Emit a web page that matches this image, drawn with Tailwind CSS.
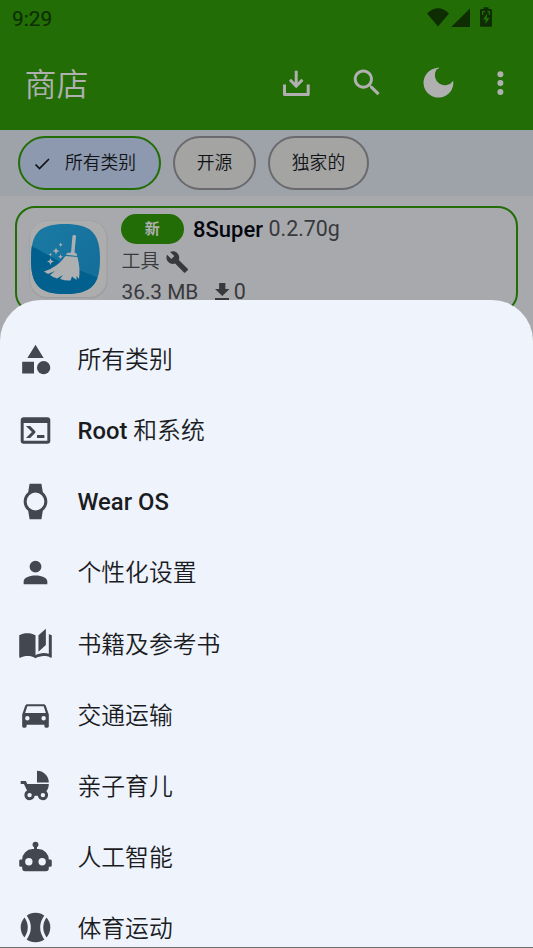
<!DOCTYPE html>
<html lang="zh-CN">
<head>
<meta charset="utf-8">
<title>商店</title>
<script src="https://cdn.jsdelivr.net/npm/@tailwindcss/browser@4"></script>
</head>
<body class="relative h-[948px] w-[533px] overflow-hidden bg-[#a8a9ad] font-[Roboto,'Noto_Sans_CJK_SC',sans-serif]">

<header class="h-[130px] bg-[#226d05]">
  <div class="flex h-9 items-center pl-3 pr-[40px] text-[#0e2d03]">
    <span class="pt-[2px] text-[20.800px] leading-6 font-normal [-webkit-text-stroke:0.200px]">9:29</span>
    <svg class="ml-auto h-9 w-[66px]" viewBox="427 0 66 36" fill="currentColor">
      <path d="M427 13.500Q438 3 449 13.500L438 26.500Z"/>
      <path d="M470 8.500V27H451.200Z"/>
      <path fill-rule="evenodd" d="M483.500 9V7.300h5V9h2.200q1.300 0 1.300 1.300v15.200q0 1.300-1.300 1.300h-9.400q-1.300 0-1.300-1.300V10.300Q480 9 481.300 9ZM487 13.500l-4 6h2.500v4.500l4-6h-2.500ZM482 11v4h1.200v-2.800h1.800V11ZM487.500 11v1.200h1.300V15h1.200v-4Z"/>
    </svg>
  </div>
  <div class="flex h-[94px] items-center text-[#b0b0b0]">
    <h1 class="ml-[24.500px] w-[254.500px] pt-[3px] text-[32px] leading-[40px] font-[350]">商店</h1>
    <svg class="h-[94px] w-[254px]" viewBox="279 36 254 94" fill="none" stroke="currentColor">
      <path stroke-width="3" stroke-linejoin="round" d="M284.500 84.500V94.500H308.200V84.500"/>
      <path stroke-width="3" d="M296.200 70.800V86M290 79.800L296.200 86.200L302.400 79.800"/>
      <path fill="currentColor" stroke="none" transform="translate(349.300 65) scale(1.480)" d="M15.500 14h-.79l-.28-.27C15.410 12.590 16 11.110 16 9.500 16 5.910 13.090 3 9.500 3S3 5.910 3 9.500 5.910 16 9.500 16c1.610 0 3.090-.59 4.230-1.570l.27.28v.79l5 4.990L20.490 19l-4.990-5zm-6 0C7.010 14 5 11.990 5 9.500S7.010 5 9.500 5 14 7.010 14 9.500 11.990 14 9.500 14z"/>
      <path fill="currentColor" stroke="none" d="M439 67.300V68.300L436.500 69.500A10 10 0 0 0 453.200 80.700A14.900 14.900 0 1 1 438 67.800Z"/>
      <g fill="currentColor" stroke="none"><circle cx="500.400" cy="74.200" r="3"/><circle cx="500.400" cy="83.100" r="3"/><circle cx="500.400" cy="92" r="3"/></g>
    </svg>
  </div>
</header>

<nav class="flex h-[66px] items-start gap-3 bg-[#9ea2a9] pt-[6px] pl-[18px] text-[17.800px] text-[#111317]">
  <div class="flex h-[54px] w-[143px] items-center rounded-full border-2 border-[#226d05] bg-[#8c99ae] pl-[13px]">
    <svg class="mr-[14px] h-[18px] w-[18px]" viewBox="0 0 18 18" fill="none" stroke="currentColor" stroke-width="1.700"><path d="M2.500 10.500L6.500 14.500L16 5"/></svg>
    <span class="font-[350]">所有类别</span>
  </div>
  <div class="flex h-[54px] w-[83px] items-center justify-center rounded-full border-2 border-[#6a6a6e] bg-[#a4a4a3] font-[350]">开源</div>
  <div class="flex h-[54px] w-[101px] items-center justify-center rounded-full border-2 border-[#6a6a6e] bg-[#a4a4a3] font-[350]">独家的</div>
</nav>

<main class="px-[15px] pt-[10px]">
  <article class="flex h-[107px] rounded-[20px] border-2 border-[#226d05] pl-[9px]">
    <svg class="mt-[10px] h-[84px] w-[84px]" viewBox="26 218 84 84">
      <defs>
        <linearGradient id="tile" x1="0" y1="0" x2="1" y2="1"><stop offset="0" stop-color="#1b7ba4"/><stop offset="1" stop-color="#126c98"/></linearGradient>
        <clipPath id="tileShape"><path d="M65 224C91 224 100 233 100 259S91 294 65 294S31 285 31 259S39 224 65 224Z"/></clipPath>
      </defs>
      <rect x="29.500" y="220.500" width="78" height="78" rx="18" fill="#9c9da1"/>
      <rect x="30" y="221" width="76.500" height="76" rx="17" fill="#adadae"/>
      <g clip-path="url(#tileShape)">
        <rect x="30" y="223" width="71" height="72" fill="url(#tile)"/>
        <path d="M30 245L62 263L101 279V296H30Z" fill="#02608f"/>
      </g>
      <g fill="#adafb0">
        <path d="M72.500 235.500Q76 234.300 76 236.500L74.500 252.500Q77.500 253.500 77 256L66 254.800Q66.500 252.500 71 252.500Z"/>
        <path d="M65.500 256L77.500 257Q80.500 269 79 279L76.500 276L76.500 280L72 276.500L70.500 280.500Q66 281 60 279L63 275L57 278.500Q53 277.500 50 275L55 271L48 274L44 271.500Q58 267 65.500 256Z"/>
        <path d="M56 247.500L57 250L59.500 251L57 252L56 254.500L55 252L52.500 251L55 250ZM50.500 258L51.500 260.500L54 261.500L51.500 262.500L50.500 265L49.500 262.500L47 261.500L49.500 260.500ZM60.700 242.500L61.300 244L62.700 244.700L61.300 245.400L60.700 247L60 245.400L58.700 244.700L60 244ZM50.500 252.500L51 254L52.500 254.500L51 255L50.500 256.500L50 255L48.500 254.500L50 254ZM60.500 254L61.200 256L63 256.700L61.200 257.400L60.500 259L59.800 257.400L58 256.700L59.800 256Z"/>
      </g>
    </svg>
    <div class="ml-[11px] flex flex-col text-[20.500px] text-[#38393c]">
      <div class="mt-[6px] flex h-[30px] items-center">
        <span class="mr-[9.500px] flex h-[30px] w-[62.500px] items-center justify-center rounded-full bg-[#226d05] text-[15px] font-bold text-[#b0b0b0]">新</span>
        <span class="text-[22px] font-medium text-[#05070f]">8Super</span>
        <span class="ml-[5.500px] pt-px text-[21.400px]">0.2.70g</span>
      </div>
      <div class="mt-[3px] flex h-[30px] items-center">
        <span class="pt-px pl-[0.500px] text-[19px] font-[350]">工具</span>
        <svg class="-mt-px ml-[6.500px] h-[22px] w-[22px]" viewBox="0.500 0.800 22.500 22.500" fill="currentColor"><path d="M22.700 19l-9.100-9.100c.9-2.300.4-5-1.500-6.900-2-2-5-2.400-7.400-1.300L9 6 6 9 1.600 4.700C.4 7.100.9 10.100 2.900 12.100c1.900 1.900 4.600 2.400 6.900 1.500l9.100 9.100c.4.4 1 .4 1.400 0l2.300-2.300c.5-.4.5-1.100.1-1.400z"/></svg>
      </div>
      <div class="flex h-[30px] items-center text-[21.500px]">
        <span class="pt-px pl-[0.500px] text-[20.800px]">36.3 MB</span>
        <svg class="mr-[4.500px] -mt-[2px] ml-[16.500px] h-[17px] w-[14.500px]" viewBox="5 3 14 17" preserveAspectRatio="none" fill="currentColor"><path d="M5 20h14v-2H5v2zM19 9h-4V3H9v6H5l7 7 7-7z"/></svg>
        <span class="pt-px">0</span>
      </div>
    </div>
  </article>
</main>

<section class="absolute inset-x-0 top-[300px] h-[647px] overflow-hidden rounded-t-[41px] bg-[#eef3fc] pt-[23.500px] text-[23.800px] text-[#1b1c1f]">
  <ul class="[&>li]:flex [&>li]:h-[71.100px] [&>li]:items-center [&>li]:gap-[23.500px] [&>li]:pl-[17px] [&>li>span]:pt-[4px] [&_svg]:h-[37px] [&_svg]:w-[37px] [&_svg]:fill-[#424750]">
    <li><svg viewBox="-0.500 -0.500 25 25"><path d="M12 2l-5.500 9h11zM3 13.500h8v8H3z"/><circle cx="17.500" cy="17.500" r="4.500"/></svg><span class="font-[350]">所有类别</span></li>
    <li><svg viewBox="-0.500 -0.500 25 25"><path d="M20,19V7H4V19H20M20,3A2,2 0 0,1 22,5V19A2,2 0 0,1 20,21H4A2,2 0 0,1 2,19V5C2,3.890 2.900,3 4,3H20M13,17V15H18V17H13M9.580,13L5.570,9H8.400L11.700,12.300C12.090,12.690 12.090,13.330 11.700,13.720L8.420,17H5.590L9.580,13Z"/></svg><span class="font-[350]"><b class="font-medium">Root </b>和系统</span></li>
    <li><svg viewBox="-0.500 -0.500 25 25"><path d="M6,12A6,6 0 0,1 12,6A6,6 0 0,1 18,12A6,6 0 0,1 12,18A6,6 0 0,1 6,12M20,12C20,9.450 18.810,7.190 16.950,5.730L16,0H8L7.050,5.730C5.190,7.190 4,9.450 4,12C4,14.540 5.190,16.810 7.050,18.270L8,24H16L16.950,18.270C18.810,16.810 20,14.540 20,12Z"/></svg><span class="font-medium">Wear OS</span></li>
    <li><svg viewBox="-0.500 -0.500 25 25"><path d="M12,4A4,4 0 0,1 16,8A4,4 0 0,1 12,12A4,4 0 0,1 8,8A4,4 0 0,1 12,4M12,14C16.420,14 20,15.790 20,18V20H4V18C4,15.790 7.580,14 12,14Z"/></svg><span class="font-[350]">个性化设置</span></li>
    <li><svg viewBox="-0.500 -0.500 25 25"><path d="M19 2L14 6.500V17.500L19 13V2M6.500 5C4.550 5 2.450 5.400 1 6.500V21.160C1 21.410 1.250 21.660 1.500 21.660C1.600 21.660 1.650 21.590 1.750 21.590C3.100 20.940 5.050 20.500 6.500 20.500C8.450 20.500 10.550 20.900 12 22C13.350 21.150 15.800 20.500 17.500 20.500C19.150 20.500 20.850 20.810 22.250 21.560C22.350 21.610 22.400 21.590 22.500 21.590C22.750 21.590 23 21.340 23 21.090V6.500C22.400 6.050 21.750 5.750 21 5.500V19C19.900 18.650 18.700 18.500 17.500 18.500C15.800 18.500 13.350 19.150 12 20V6.500C10.550 5.400 8.450 5 6.500 5Z"/></svg><span class="font-[350]">书籍及参考书</span></li>
    <li><svg viewBox="-0.500 -0.500 25 25"><path d="M5,11L6.500,6.500H17.500L19,11M17.500,16A1.500,1.500 0 0,1 16,14.500A1.500,1.500 0 0,1 17.500,13A1.500,1.500 0 0,1 19,14.500A1.500,1.500 0 0,1 17.500,16M6.500,16A1.500,1.500 0 0,1 5,14.500A1.500,1.500 0 0,1 6.500,13A1.500,1.500 0 0,1 8,14.500A1.500,1.500 0 0,1 6.500,16M18.920,6C18.720,5.420 18.160,5 17.500,5H6.500C5.840,5 5.280,5.420 5.080,6L3,12V20A1,1 0 0,0 4,21H5A1,1 0 0,0 6,20V19H18V20A1,1 0 0,0 19,21H20A1,1 0 0,0 21,20V12L18.920,6Z"/></svg><span class="font-[350]">交通运输</span></li>
    <li><svg viewBox="-0.500 -0.500 25 25"><path d="M13,2V10H21A8,8 0 0,0 13,2M19.320,15.890C20.370,14.540 21,12.840 21,11H6.440L5.500,9H2V11H4.220C4.220,11 6.110,15.070 6.340,15.420C5.240,16 4.500,17.170 4.500,18.500A3.500,3.500 0 0,0 8,22C9.760,22 11.220,20.700 11.460,19H13.540C13.780,20.700 15.240,22 17,22A3.500,3.500 0 0,0 20.500,18.500C20.500,17.460 20.040,16.530 19.320,15.890M8,20A1.500,1.500 0 0,1 6.500,18.500A1.500,1.500 0 0,1 8,17A1.500,1.500 0 0,1 9.500,18.500A1.500,1.500 0 0,1 8,20M17,20A1.500,1.500 0 0,1 15.500,18.500A1.500,1.500 0 0,1 17,17A1.500,1.500 0 0,1 18.500,18.500A1.500,1.500 0 0,1 17,20Z"/></svg><span class="font-[350]">亲子育儿</span></li>
    <li><svg viewBox="-0.500 -0.500 25 25"><path d="M12,2A2,2 0 0,1 14,4C14,4.740 13.600,5.390 13,5.730V7H14A7,7 0 0,1 21,14H22A1,1 0 0,1 23,15V18A1,1 0 0,1 22,19H21V20A2,2 0 0,1 19,22H5A2,2 0 0,1 3,20V19H2A1,1 0 0,1 1,18V15A1,1 0 0,1 2,14H3A7,7 0 0,1 10,7H11V5.730C10.400,5.390 10,4.740 10,4A2,2 0 0,1 12,2M7.500,13A2.500,2.500 0 0,0 5,15.500A2.500,2.500 0 0,0 7.500,18A2.500,2.500 0 0,0 10,15.500A2.500,2.500 0 0,0 7.500,13M16.500,13A2.500,2.500 0 0,0 14,15.500A2.500,2.500 0 0,0 16.500,18A2.500,2.500 0 0,0 19,15.500A2.500,2.500 0 0,0 16.500,13Z"/></svg><span class="font-[350]">人工智能</span></li>
    <li><svg viewBox="-0.500 -0.500 25 25"><circle cx="12" cy="12" r="10"/><path class="fill-none stroke-[#eef3fc] stroke-2" d="M4.500 3.500Q11.200 12 4.500 20.500M19.500 3.500Q12.800 12 19.500 20.500"/></svg><span class="font-[350]">体育运动</span></li>
  </ul>
</section>
<div class="absolute inset-x-0 bottom-0 h-px bg-[#6b6c6e]"></div>
</body>
</html>
